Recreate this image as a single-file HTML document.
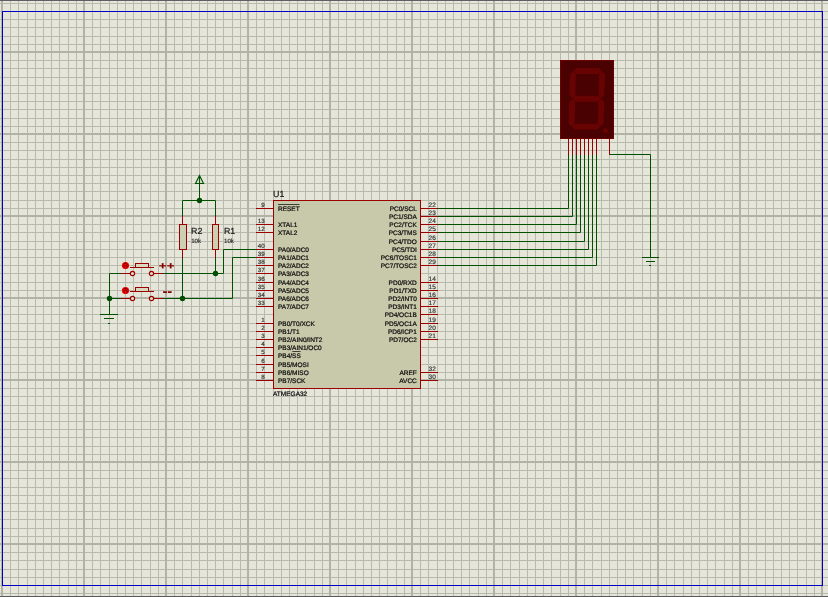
<!DOCTYPE html>
<html lang="en"><head><meta charset="utf-8"><title>ATMEGA32 7-segment schematic</title>
<style>html,body{margin:0;padding:0;background:#e5e6d9;overflow:hidden}svg{display:block;will-change:transform}text{text-rendering:geometricPrecision}</style>
</head><body>
<svg width="828" height="597" viewBox="0 0 828 597" font-family="'Liberation Sans', sans-serif">
<rect x="0" y="0" width="828" height="597" fill="#e5e6d9"/>
<path d="M10.5 0V597M18.5 0V597M27.5 0V597M35.5 0V597M43.5 0V597M51.5 0V597M59.5 0V597M68.5 0V597M76.5 0V597M92.5 0V597M100.5 0V597M109.5 0V597M117.5 0V597M125.5 0V597M133.5 0V597M141.5 0V597M150.5 0V597M158.5 0V597M174.5 0V597M182.5 0V597M191.5 0V597M199.5 0V597M207.5 0V597M215.5 0V597M223.5 0V597M232.5 0V597M240.5 0V597M256.5 0V597M264.5 0V597M273.5 0V597M281.5 0V597M289.5 0V597M297.5 0V597M305.5 0V597M314.5 0V597M322.5 0V597M338.5 0V597M346.5 0V597M355.5 0V597M363.5 0V597M371.5 0V597M379.5 0V597M387.5 0V597M396.5 0V597M404.5 0V597M420.5 0V597M428.5 0V597M437.5 0V597M445.5 0V597M453.5 0V597M461.5 0V597M469.5 0V597M478.5 0V597M486.5 0V597M502.5 0V597M510.5 0V597M519.5 0V597M527.5 0V597M535.5 0V597M543.5 0V597M551.5 0V597M560.5 0V597M568.5 0V597M584.5 0V597M592.5 0V597M601.5 0V597M609.5 0V597M617.5 0V597M625.5 0V597M633.5 0V597M642.5 0V597M650.5 0V597M666.5 0V597M674.5 0V597M683.5 0V597M691.5 0V597M699.5 0V597M707.5 0V597M715.5 0V597M724.5 0V597M732.5 0V597M748.5 0V597M756.5 0V597M765.5 0V597M773.5 0V597M781.5 0V597M789.5 0V597M797.5 0V597M806.5 0V597M814.5 0V597M0 3.5H828M0 11.5H828M0 19.5H828M0 27.5H828M0 36.5H828M0 44.5H828M0 60.5H828M0 68.5H828M0 77.5H828M0 85.5H828M0 93.5H828M0 101.5H828M0 109.5H828M0 118.5H828M0 126.5H828M0 142.5H828M0 150.5H828M0 159.5H828M0 167.5H828M0 175.5H828M0 183.5H828M0 191.5H828M0 200.5H828M0 208.5H828M0 224.5H828M0 232.5H828M0 241.5H828M0 249.5H828M0 257.5H828M0 265.5H828M0 273.5H828M0 282.5H828M0 290.5H828M0 306.5H828M0 314.5H828M0 323.5H828M0 331.5H828M0 339.5H828M0 347.5H828M0 355.5H828M0 364.5H828M0 372.5H828M0 388.5H828M0 396.5H828M0 405.5H828M0 413.5H828M0 421.5H828M0 429.5H828M0 437.5H828M0 446.5H828M0 454.5H828M0 470.5H828M0 478.5H828M0 487.5H828M0 495.5H828M0 503.5H828M0 511.5H828M0 519.5H828M0 528.5H828M0 536.5H828M0 552.5H828M0 560.5H828M0 569.5H828M0 577.5H828M0 585.5H828M0 593.5H828" stroke="#b9baae" stroke-width="1" fill="none"/>
<path d="M2 0V597M84 0V597M166 0V597M248 0V597M330 0V597M412 0V597M494 0V597M576 0V597M658 0V597M740 0V597M822 0V597M0 52H828M0 134H828M0 216H828M0 298H828M0 380H828M0 462H828M0 544H828" stroke="#b2b3a7" stroke-width="2" fill="none"/>
<rect x="2.5" y="11.5" width="820" height="574" fill="none" stroke="#0000c4" stroke-width="1"/>
<rect x="0" y="0" width="828" height="1" fill="#606064"/>
<rect x="0" y="596" width="828" height="1" fill="#58585a"/>
<path d="M199.5 183.5V200.5M182.5 216.5V200.5H215.5V216.5M182.5 257.5V298.5M215.5 257.5V273.5M121.5 273.5H109.5V314.5M162.5 273.5H223.5V249.5H256.5M121.5 298.5H109.5M162.5 298.5H232.5V257.5H256.5M568.5 155.5V208.5H437.5M572.5 155.5V216.5H437.5M576.5 155.5V224.5H437.5M580.5 155.5V232.5H437.5M584.5 155.5V241.5H437.5M588.5 155.5V249.5H437.5M592.5 155.5V257.5H437.5M596.5 155.5V265.5H437.5M609.5 154.5H650.5V257.5" stroke="#005000" stroke-width="1" fill="none" stroke-linecap="square"/>
<path d="M100.5 314.5H117.5M104.5 318.5H113.5M108.5 323.5H109.5M642.5 257.5H658.5M646.5 261.5H654.5M649.5 265.5H650.5" stroke="#005000" stroke-width="1" fill="none" stroke-linecap="square"/>
<path d="M199.5 175.5L203.5 183.5H195.5ZM199.5 175.5V183.5" stroke="#005000" stroke-width="1.15" fill="none"/>
<circle cx="199.5" cy="200.5" r="2.7" fill="#004c00"/>
<circle cx="215.5" cy="273.5" r="2.7" fill="#004c00"/>
<circle cx="182.5" cy="298.5" r="2.7" fill="#004c00"/>
<circle cx="109.5" cy="298.5" r="2.7" fill="#004c00"/>
<path d="M182.5 216.5V224.5M182.5 249.5V257.5" stroke="#9a0000" stroke-width="1" stroke-linecap="square"/>
<rect x="179.5" y="224.5" width="7" height="25.0" fill="#cecfb2" stroke="#9a0000" stroke-width="1"/>
<path d="M215.5 216.5V224.5M215.5 249.5V257.5" stroke="#9a0000" stroke-width="1" stroke-linecap="square"/>
<rect x="212.5" y="224.5" width="6" height="25.0" fill="#cecfb2" stroke="#9a0000" stroke-width="1"/>
<path d="M121.5 273.5H130M154 273.5H162.5M130.5 267.5H153.5" stroke="#9a0000" stroke-width="1" stroke-linecap="square" fill="none"/><circle cx="132.5" cy="273.5" r="2.15" fill="#dcddc6" stroke="#9a0000" stroke-width="1.15"/><circle cx="151.5" cy="273.5" r="2.15" fill="#dcddc6" stroke="#9a0000" stroke-width="1.15"/><rect x="135.5" y="263.5" width="13" height="4" fill="#d8d9be" stroke="#9a0000" stroke-width="1"/><circle cx="125.5" cy="265.5" r="3.6" fill="#f40000"/><path d="M124.4 263.4H126.6M123.4 264.2L124.7 265.5L123.4 266.8M127.6 264.2L126.3 265.5L127.6 266.8M123.9 267.8h0.9M126.2 267.8h0.9" stroke="#400000" stroke-width="0.95" fill="none"/>
<path d="M121.5 298.5H130M154 298.5H162.5M130.5 291.5H153.5" stroke="#9a0000" stroke-width="1" stroke-linecap="square" fill="none"/><circle cx="132.5" cy="298.5" r="2.15" fill="#dcddc6" stroke="#9a0000" stroke-width="1.15"/><circle cx="151.5" cy="298.5" r="2.15" fill="#dcddc6" stroke="#9a0000" stroke-width="1.15"/><rect x="135.5" y="287.5" width="13" height="4" fill="#d8d9be" stroke="#9a0000" stroke-width="1"/><circle cx="125.5" cy="290.5" r="3.6" fill="#f40000"/><path d="M124.4 288.4H126.6M123.4 289.2L124.7 290.5L123.4 291.8M127.6 289.2L126.3 290.5L127.6 291.8M123.9 292.8h0.9M126.2 292.8h0.9" stroke="#400000" stroke-width="0.95" fill="none"/>
<path d="M256.5 208.5H273.5M256.5 224.5H273.5M256.5 232.5H273.5M256.5 249.5H273.5M256.5 257.5H273.5M256.5 265.5H273.5M256.5 273.5H273.5M256.5 282.5H273.5M256.5 290.5H273.5M256.5 298.5H273.5M256.5 306.5H273.5M256.5 323.5H273.5M256.5 331.5H273.5M256.5 339.5H273.5M256.5 347.5H273.5M256.5 355.5H273.5M256.5 364.5H273.5M256.5 372.5H273.5M256.5 380.5H273.5M420.5 208.5H437.5M420.5 216.5H437.5M420.5 224.5H437.5M420.5 232.5H437.5M420.5 241.5H437.5M420.5 249.5H437.5M420.5 257.5H437.5M420.5 265.5H437.5M420.5 282.5H437.5M420.5 290.5H437.5M420.5 298.5H437.5M420.5 306.5H437.5M420.5 314.5H437.5M420.5 323.5H437.5M420.5 331.5H437.5M420.5 339.5H437.5M420.5 372.5H437.5M420.5 380.5H437.5" stroke="#9a0000" stroke-width="1" fill="none" stroke-linecap="square"/>
<rect x="273.5" y="200.5" width="147.0" height="188.0" fill="#c8c8aa" stroke="#9a0000" stroke-width="1"/>
<path d="M278 204.5H299.5M292.3 351.5H300.6" stroke="#1c1c1c" stroke-width="0.8" fill="none"/>
<path d="M568.5 139V155M572.5 139V155M576.5 139V155M580.5 139V155M584.5 139V155M588.5 139V155M592.5 139V155M596.5 139V155M609.5 139V155" stroke="#9a0000" stroke-width="1" fill="none"/>
<rect x="560.5" y="60.5" width="53" height="78" fill="#4a0101" stroke="#700000" stroke-width="1"/>
<g transform="translate(0,129.6) skewX(-1.6) translate(0,-129.6)"><path d="M571.62 70.97L574.6 68.0L597.3 68.0L600.27 70.97L597.3 73.95L574.6 73.95ZM571.62 98.8L574.6 95.83L597.3 95.83L600.27 98.8L597.3 101.77L574.6 101.77ZM571.62 126.62L574.6 123.65L597.3 123.65L600.27 126.62L597.3 129.6L574.6 129.6ZM571.38 71.22L574.35 74.2L574.35 95.58L571.38 98.55L568.4 95.58L568.4 74.2ZM600.52 71.22L603.5 74.2L603.5 95.58L600.52 98.55L597.55 95.58L597.55 74.2ZM571.38 99.05L574.35 102.02L574.35 123.4L571.38 126.38L568.4 123.4L568.4 102.02ZM600.52 99.05L603.5 102.02L603.5 123.4L600.52 126.38L597.55 123.4L597.55 102.02Z" fill="#680303"/></g><circle cx="605.5" cy="130.5" r="2.5" fill="#680303"/>
<g>
<text x="191.0" y="233.6" font-size="8.85" fill="#111" stroke="#111" stroke-width="0.16">R2</text>
<text x="191.2" y="242.6" font-size="6.1" fill="#262626" stroke="#262626" stroke-width="0.15">10k</text>
<text x="223.9" y="233.6" font-size="8.85" fill="#111" stroke="#111" stroke-width="0.16">R1</text>
<text x="224.1" y="242.6" font-size="6.1" fill="#262626" stroke="#262626" stroke-width="0.15">10k</text>
<text transform="translate(158.9,265.4) scale(1,0.78)" x="0" y="4.6" font-size="12.6" font-weight="bold" fill="#860000" stroke="#860000" stroke-width="0.35" letter-spacing="0.85">++</text>
<text x="162.6" y="296.0" font-size="15" font-weight="bold" fill="#860000" letter-spacing="-0.3">--</text>
<g font-size="6.5" fill="#101010" stroke="#101010" stroke-width="0.24">
<text x="264.6" y="206.6" text-anchor="end" font-size="6.2" fill="#303030" stroke="#303030" stroke-width="0.16">9</text>
<text x="278" y="210.55">RESET</text>
<text x="264.6" y="222.6" text-anchor="end" font-size="6.2" fill="#303030" stroke="#303030" stroke-width="0.16">13</text>
<text x="278" y="226.55">XTAL1</text>
<text x="264.6" y="230.6" text-anchor="end" font-size="6.2" fill="#303030" stroke="#303030" stroke-width="0.16">12</text>
<text x="278" y="234.55">XTAL2</text>
<text x="264.6" y="247.6" text-anchor="end" font-size="6.2" fill="#303030" stroke="#303030" stroke-width="0.16">40</text>
<text x="278" y="251.55">PA0/ADC0</text>
<text x="264.6" y="255.6" text-anchor="end" font-size="6.2" fill="#303030" stroke="#303030" stroke-width="0.16">39</text>
<text x="278" y="259.55">PA1/ADC1</text>
<text x="264.6" y="263.6" text-anchor="end" font-size="6.2" fill="#303030" stroke="#303030" stroke-width="0.16">38</text>
<text x="278" y="267.55">PA2/ADC2</text>
<text x="264.6" y="271.6" text-anchor="end" font-size="6.2" fill="#303030" stroke="#303030" stroke-width="0.16">37</text>
<text x="278" y="275.55">PA3/ADC3</text>
<text x="264.6" y="280.6" text-anchor="end" font-size="6.2" fill="#303030" stroke="#303030" stroke-width="0.16">36</text>
<text x="278" y="284.55">PA4/ADC4</text>
<text x="264.6" y="288.6" text-anchor="end" font-size="6.2" fill="#303030" stroke="#303030" stroke-width="0.16">35</text>
<text x="278" y="292.55">PA5/ADC5</text>
<text x="264.6" y="296.6" text-anchor="end" font-size="6.2" fill="#303030" stroke="#303030" stroke-width="0.16">34</text>
<text x="278" y="300.55">PA6/ADC6</text>
<text x="264.6" y="304.6" text-anchor="end" font-size="6.2" fill="#303030" stroke="#303030" stroke-width="0.16">33</text>
<text x="278" y="308.55">PA7/ADC7</text>
<text x="264.6" y="321.6" text-anchor="end" font-size="6.2" fill="#303030" stroke="#303030" stroke-width="0.16">1</text>
<text x="278" y="325.55">PB0/T0/XCK</text>
<text x="264.6" y="329.6" text-anchor="end" font-size="6.2" fill="#303030" stroke="#303030" stroke-width="0.16">2</text>
<text x="278" y="333.55">PB1/T1</text>
<text x="264.6" y="337.6" text-anchor="end" font-size="6.2" fill="#303030" stroke="#303030" stroke-width="0.16">3</text>
<text x="278" y="341.55">PB2/AIN0/INT2</text>
<text x="264.6" y="345.6" text-anchor="end" font-size="6.2" fill="#303030" stroke="#303030" stroke-width="0.16">4</text>
<text x="278" y="349.55">PB3/AIN1/OC0</text>
<text x="264.6" y="353.6" text-anchor="end" font-size="6.2" fill="#303030" stroke="#303030" stroke-width="0.16">5</text>
<text x="278" y="357.55">PB4/SS</text>
<text x="264.6" y="362.6" text-anchor="end" font-size="6.2" fill="#303030" stroke="#303030" stroke-width="0.16">6</text>
<text x="278" y="366.55">PB5/MOSI</text>
<text x="264.6" y="370.6" text-anchor="end" font-size="6.2" fill="#303030" stroke="#303030" stroke-width="0.16">7</text>
<text x="278" y="374.55">PB6/MISO</text>
<text x="264.6" y="378.6" text-anchor="end" font-size="6.2" fill="#303030" stroke="#303030" stroke-width="0.16">8</text>
<text x="278" y="382.55">PB7/SCK</text>
<text x="428.6" y="206.6" fill="#303030" stroke="#303030" stroke-width="0.16">22</text>
<text x="416.8" y="210.55" text-anchor="end">PC0/SCL</text>
<text x="428.6" y="214.6" fill="#303030" stroke="#303030" stroke-width="0.16">23</text>
<text x="416.8" y="218.55" text-anchor="end">PC1/SDA</text>
<text x="428.6" y="222.6" fill="#303030" stroke="#303030" stroke-width="0.16">24</text>
<text x="416.8" y="226.55" text-anchor="end">PC2/TCK</text>
<text x="428.6" y="230.6" fill="#303030" stroke="#303030" stroke-width="0.16">25</text>
<text x="416.8" y="234.55" text-anchor="end">PC3/TMS</text>
<text x="428.6" y="239.6" fill="#303030" stroke="#303030" stroke-width="0.16">26</text>
<text x="416.8" y="243.55" text-anchor="end">PC4/TDO</text>
<text x="428.6" y="247.6" fill="#303030" stroke="#303030" stroke-width="0.16">27</text>
<text x="416.8" y="251.55" text-anchor="end">PC5/TDI</text>
<text x="428.6" y="255.6" fill="#303030" stroke="#303030" stroke-width="0.16">28</text>
<text x="416.8" y="259.55" text-anchor="end">PC6/TOSC1</text>
<text x="428.6" y="263.6" fill="#303030" stroke="#303030" stroke-width="0.16">29</text>
<text x="416.8" y="267.55" text-anchor="end">PC7/TOSC2</text>
<text x="428.6" y="280.6" fill="#303030" stroke="#303030" stroke-width="0.16">14</text>
<text x="416.8" y="284.55" text-anchor="end">PD0/RXD</text>
<text x="428.6" y="288.6" fill="#303030" stroke="#303030" stroke-width="0.16">15</text>
<text x="416.8" y="292.55" text-anchor="end">PD1/TXD</text>
<text x="428.6" y="296.6" fill="#303030" stroke="#303030" stroke-width="0.16">16</text>
<text x="416.8" y="300.55" text-anchor="end">PD2/INT0</text>
<text x="428.6" y="304.6" fill="#303030" stroke="#303030" stroke-width="0.16">17</text>
<text x="416.8" y="308.55" text-anchor="end">PD3/INT1</text>
<text x="428.6" y="312.6" fill="#303030" stroke="#303030" stroke-width="0.16">18</text>
<text x="416.8" y="316.55" text-anchor="end">PD4/OC1B</text>
<text x="428.6" y="321.6" fill="#303030" stroke="#303030" stroke-width="0.16">19</text>
<text x="416.8" y="325.55" text-anchor="end">PD5/OC1A</text>
<text x="428.6" y="329.6" fill="#303030" stroke="#303030" stroke-width="0.16">20</text>
<text x="416.8" y="333.55" text-anchor="end">PD6/ICP1</text>
<text x="428.6" y="337.6" fill="#303030" stroke="#303030" stroke-width="0.16">21</text>
<text x="416.8" y="341.55" text-anchor="end">PD7/OC2</text>
<text x="428.6" y="370.6" fill="#303030" stroke="#303030" stroke-width="0.16">32</text>
<text x="416.8" y="374.55" text-anchor="end">AREF</text>
<text x="428.6" y="378.6" fill="#303030" stroke="#303030" stroke-width="0.16">30</text>
<text x="416.8" y="382.55" text-anchor="end">AVCC</text>
<text x="273" y="395.7">ATMEGA32</text>
</g>
<text x="273" y="196.7" font-size="8.85" fill="#111" stroke="#111" stroke-width="0.16">U1</text>
</g>
</svg>
</body></html>
